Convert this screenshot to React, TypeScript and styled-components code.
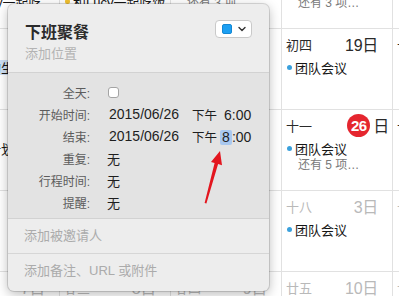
import React from "react";
import styled, { createGlobalStyle } from "styled-components";

const GlobalStyle = createGlobalStyle`
  html, body {
    margin: 0;
    padding: 0;
    width: 399px;
    height: 296px;
    overflow: hidden;
    background: #fff;
  }
  body {
    font-family: "Liberation Sans", "Noto Sans CJK SC", sans-serif;
    color: #222;
    -webkit-font-smoothing: antialiased;
  }
`;

type EventItem = { title: string; color?: string; selected?: boolean; more?: boolean };
type Day = { lunar?: string; day?: string; muted?: boolean; today?: boolean; lines: EventItem[] };

const BLUE = "#3aa0dc";
const YELLOW = "#f2c12e";

const weeks: Day[][] = [
  [
    { lunar: "初六", day: "14日", lines: [{ title: "团队会议" }, { title: "和Lucy一起吃…", color: YELLOW }] },
    { lunar: "初七", day: "15日", lines: [{ title: "下午茶" }, { title: "和Lucy一起吃饭", color: YELLOW }] },
    { lunar: "初八", day: "16日", lines: [{ title: "团队会议" }, { title: "还有 3 项…", more: true }] },
    { lunar: "初九", day: "17日", lines: [{ title: "团队会议" }, { title: "还有 3 项…", more: true }] },
    { lunar: "初十", day: "18日", lines: [{ title: "团队会议" }] },
  ],
  [
    { lunar: "初一", day: "16日", lines: [{ title: "小王的生日", selected: true }] },
    { lunar: "初二", day: "17日", lines: [] },
    { lunar: "初三", day: "18日", lines: [] },
    { lunar: "初四", day: "19日", lines: [{ title: "团队会议", color: BLUE }] },
    { lunar: "十二", day: "20日", lines: [] },
  ],
  [
    { lunar: "初八", day: "23日", lines: [{ title: "制定计划" }] },
    { lunar: "初九", day: "24日", lines: [] },
    { lunar: "初十", day: "25日", lines: [] },
    { lunar: "十一", day: "26", today: true, lines: [{ title: "团队会议", color: BLUE }, { title: "还有 5 项…", more: true }] },
    { lunar: "十二", day: "27日", lines: [] },
  ],
  [
    { lunar: "十五", day: "30日", lines: [] },
    { lunar: "十六", day: "1日", muted: true, lines: [] },
    { lunar: "十七", day: "2日", muted: true, lines: [] },
    { lunar: "十八", day: "3日", muted: true, lines: [{ title: "团队会议", color: BLUE }] },
    { lunar: "十九", day: "4日", muted: true, lines: [] },
  ],
  [
    { lunar: "廿二", day: "7日", muted: true, lines: [] },
    { lunar: "廿三", day: "8日", muted: true, lines: [] },
    { lunar: "廿四", day: "9日", muted: true, lines: [] },
    { lunar: "廿五", day: "10日", muted: true, lines: [] },
    { lunar: "廿六", day: "11日", muted: true, lines: [] },
  ],
];

const Screen = styled.div`
  position: relative;
  width: 399px;
  height: 296px;
  overflow: hidden;
  background: #fff;
`;

const Month = styled.div`
  display: grid;
  grid-template-columns: repeat(5, 111px);
  grid-auto-rows: 81px;
  margin: -52px 0 0 -51px;
`;

const Cell = styled.div`
  display: flex;
  flex-direction: column;
  border-right: 1px solid #e1e1e1;
  border-bottom: 1px solid #e1e1e1;
  overflow: hidden;
  min-width: 0;
`;

const CellHead = styled.div<{ $muted?: boolean; $today?: boolean }>`
  display: flex;
  justify-content: space-between;
  align-items: center;
  height: 22px;
  margin-top: 4px;
  padding: 0 ${(p) => (p.$today ? "3px" : "14px")} 0 4px;
  color: ${(p) => (p.$muted ? "#b9b9b9" : "#2a2a2a")};
`;

const Lunar = styled.span`
  font-size: 13px;
`;

const DayNum = styled.span`
  display: flex;
  align-items: center;
  gap: 3px;
  font-size: 16px;
  letter-spacing: -0.3px;
`;

const TodayBadge = styled.span`
  display: inline-flex;
  align-items: center;
  justify-content: center;
  width: 23px;
  height: 23px;
  border-radius: 50%;
  background: #e5262f;
  color: #fff;
  font-size: 15px;
  font-weight: bold;
  letter-spacing: -0.5px;
`;

const Lines = styled.div`
  display: flex;
  flex-direction: column;
  margin-top: 5px;
`;

const Line = styled.div<{ $more?: boolean; $selected?: boolean }>`
  display: flex;
  align-items: center;
  gap: 3px;
  height: 15px;
  padding-left: ${(p) => (p.$more ? "16px" : "5px")};
  font-size: ${(p) => (p.$more ? "12px" : "13px")};
  color: ${(p) => (p.$more ? "#7a7a7a" : "#161616")};
  background: ${(p) => (p.$selected ? "#cfe0f5" : "transparent")};
  white-space: nowrap;
  overflow: hidden;
`;

const Dot = styled.span<{ $color: string }>`
  flex: none;
  width: 5px;
  height: 5px;
  border-radius: 50%;
  background: ${(p) => p.$color};
`;

const Popover = styled.div`
  position: absolute;
  left: 8px;
  top: 4px;
  width: 261px;
  border-radius: 6px;
  overflow: hidden;
  background: #ededed;
  box-shadow: 0 0 0 1px rgba(0, 0, 0, 0.13), 0 3px 12px rgba(0, 0, 0, 0.28);
`;

const Header = styled.div`
  display: flex;
  justify-content: space-between;
  align-items: flex-start;
  height: 68px;
  box-sizing: border-box;
  padding: 19px 17px 0 17px;
`;

const TitleBlock = styled.div`
  display: flex;
  flex-direction: column;
  gap: 3px;
`;

const Title = styled.div`
  font-size: 16px;
  line-height: 20px;
  font-weight: bold;
  color: #2b2b2b;
`;

const Placeholder = styled.div`
  font-size: 13px;
  line-height: 16px;
  color: #b3b3b3;
`;

const ColorPicker = styled.div`
  display: flex;
  align-items: center;
  gap: 6px;
  margin-top: -3px;
  height: 18px;
  padding: 0 5px 0 6px;
  box-sizing: border-box;
  background: #fff;
  border: 1px solid #c9c9c9;
  border-radius: 4px;
`;

const Swatch = styled.span`
  width: 10px;
  height: 10px;
  border-radius: 2px;
  background: #1c9ff2;
  border: 1px solid #1488d4;
  box-sizing: border-box;
`;

const Form = styled.div`
  display: flex;
  flex-direction: column;
  padding: 8px 0 5px;
  background: #e3e3e3;
  border-top: 1px solid #d2d2d2;
  border-bottom: 1px solid #d2d2d2;
`;

const FieldRow = styled.div`
  display: grid;
  grid-template-columns: 82px 1fr;
  column-gap: 17px;
  align-items: center;
  height: 22px;
`;

const Label = styled.span`
  text-align: right;
  font-size: 12px;
  color: #5c5c5c;
`;

const Value = styled.span`
  display: flex;
  align-items: center;
  gap: 13px;
  font-size: 14px;
  color: #1e1e1e;
`;

const Plain = styled.span`
  font-size: 13px;
`;

const DateText = styled.span`
  padding-left: 2px;
`;

const Meridiem = styled.span`
  font-size: 12.5px;
  margin-right: 3px;
`;

const Highlight = styled.span`
  display: inline-block;
  background: #a9c8ef;
  border-radius: 2px;
  padding: 0 2px;
  line-height: 15px;
`;

const Checkbox = styled.span`
  width: 11px;
  height: 11px;
  margin-left: 1px;
  box-sizing: border-box;
  background: #fff;
  border: 1px solid #a4a4a4;
  border-radius: 3px;
`;

const FooterRow = styled.div<{ $h: number }>`
  display: flex;
  align-items: flex-start;
  height: ${(p) => p.$h}px;
  box-sizing: border-box;
  padding: 9px 0 0 16px;
  font-size: 13px;
  line-height: 16px;
  color: #ababab;
  & + & {
    border-top: 1px solid #d6d6d6;
  }
`;

const Arrow = styled.svg`
  position: absolute;
  left: 0;
  top: 0;
  pointer-events: none;
`;

const Chevron = () => (
  <svg width="8" height="6" viewBox="0 0 8 6">
    <path d="M1 1.5 L4 4.5 L7 1.5" fill="none" stroke="#333" strokeWidth="1.4" strokeLinecap="round" strokeLinejoin="round" />
  </svg>
);

const fields: { label: string; value: React.ReactNode }[] = [
  { label: "全天:", value: <Checkbox /> },
  {
    label: "开始时间:",
    value: (
      <>
        <DateText>2015/06/26</DateText>
        <span>
          <Meridiem>下午</Meridiem> 6:00
        </span>
      </>
    ),
  },
  {
    label: "结束:",
    value: (
      <>
        <DateText>2015/06/26</DateText>
        <span>
          <Meridiem>下午</Meridiem>
          <Highlight>8</Highlight>:00
        </span>
      </>
    ),
  },
  { label: "重复:", value: <Plain>无</Plain> },
  { label: "行程时间:", value: <Plain>无</Plain> },
  { label: "提醒:", value: <Plain>无</Plain> },
];

export default function App() {
  return (
    <>
      <GlobalStyle />
      <Screen>
        <Month>
          {weeks.flat().map((d, i) => (
            <Cell key={i}>
              <CellHead $muted={d.muted} $today={d.today}>
                <Lunar>{d.lunar}</Lunar>
                <DayNum>
                  {d.today ? (
                    <>
                      <TodayBadge>{d.day}</TodayBadge>日
                    </>
                  ) : (
                    d.day
                  )}
                </DayNum>
              </CellHead>
              <Lines>
                {d.lines.map((l, j) => (
                  <Line key={j} $more={l.more} $selected={l.selected}>
                    {!l.more && <Dot $color={l.color ?? BLUE} />}
                    {l.title}
                  </Line>
                ))}
              </Lines>
            </Cell>
          ))}
        </Month>

        <Popover>
          <Header>
            <TitleBlock>
              <Title>下班聚餐</Title>
              <Placeholder>添加位置</Placeholder>
            </TitleBlock>
            <ColorPicker>
              <Swatch />
              <Chevron />
            </ColorPicker>
          </Header>
          <Form>
            {fields.map((f) => (
              <FieldRow key={f.label}>
                <Label>{f.label}</Label>
                <Value>{f.value}</Value>
              </FieldRow>
            ))}
          </Form>
          <FooterRow $h={34}>添加被邀请人</FooterRow>
          <FooterRow $h={38}>添加备注、URL 或附件</FooterRow>
        </Popover>

        <Arrow width="399" height="296" viewBox="0 0 399 296">
          <polygon points="220,151 222,165.2 218.1,164 206.4,203.4 204.6,202.9 214.6,163 211,161.9" fill="#e3161f" />
        </Arrow>
      </Screen>
    </>
  );
}
